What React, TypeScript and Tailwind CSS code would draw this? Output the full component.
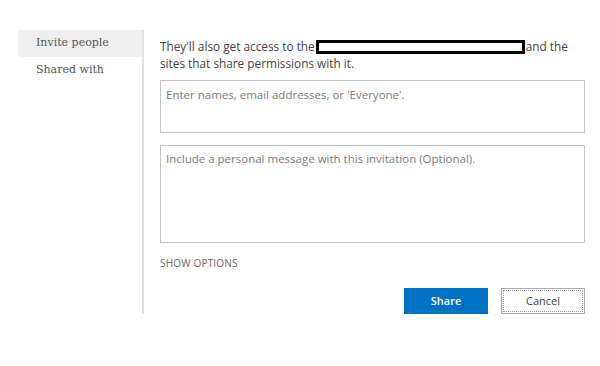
import React from 'react'

// Share dialog: left nav + invite form

const NAV = ['Invite people', 'Shared with']

export default function App() {
  return (
    <div className="w-[600px] h-[366px] bg-white" style={{ fontFamily: '"Open Sans", "Noto Sans", sans-serif' }}>
      <div className="flex pt-[30px] pl-[18px]">
        {/* Left nav */}
        <div className="w-[126px] h-[284px] border-r-2 border-[#e1e1e1] flex flex-col" style={{ fontFamily: '"DejaVu Serif", "Liberation Serif", serif' }}>
          {NAV.map((item, i) => (
            <div
              key={item}
              className={`h-[27px] flex items-center pl-[18px] text-[11px] text-[#555] ${i === 0 ? 'bg-[#efefef]' : ''}`}
            >
              {item}
            </div>
          ))}
        </div>

        {/* Main form */}
        <div className="w-[425px] ml-[16px] pt-[8px]">
          <div className="text-[11.8px] leading-[17px] text-[#444]">
            <div className="flex items-center">
              <span>They'll also get access to the</span>
              <span className="w-[209px] h-[14px] mx-[1px] border-[3px] border-black bg-white" />
              <span>and the</span>
            </div>
            <div>sites that share permissions with it.</div>
          </div>

          <div className="mt-[8px] h-[53px] border border-[#c6c6c6] px-[5px] py-[5px] text-[11.5px] text-[#7a7a7a]">
            Enter names, email addresses, or 'Everyone'.
          </div>

          <div className="mt-[12px] h-[98px] border border-[#c6c6c6] px-[5px] py-[4px] text-[11.5px] text-[#7a7a7a]">
            Include a personal message with this invitation (Optional).
          </div>

          <div className="mt-[13px] text-[10px] text-[#666] tracking-[0.2px]">SHOW OPTIONS</div>

          <div className="mt-[17px] flex justify-end gap-[13px]">
            <button className="w-[84px] h-[26px] bg-[#0072c6] text-white text-[11px] font-semibold">Share</button>
            <button className="w-[84px] h-[26px] bg-white border border-[#aaa] outline-1 outline-dotted outline-[#999] -outline-offset-[3px] text-[11px] text-[#444]">
              Cancel
            </button>
          </div>
        </div>
      </div>
    </div>
  )
}
